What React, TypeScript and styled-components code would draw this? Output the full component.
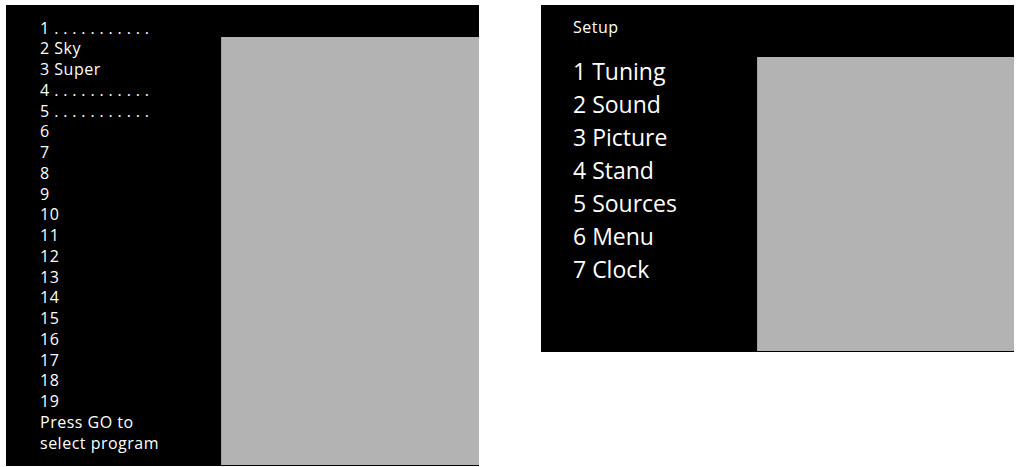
import React from 'react'
import styled, { createGlobalStyle } from 'styled-components'

const GlobalStyle = createGlobalStyle`
  html, body {
    margin: 0;
    padding: 0;
    background: #ffffff;
  }
  body {
    font-family: "Open Sans", "Noto Sans", sans-serif;
    -webkit-font-smoothing: antialiased;
  }
`

const Page = styled.div`
  display: flex;
  align-items: flex-start;
  gap: 62px;
  padding: 5px 0 0 6px;
`

const Panel = styled.div<{ $height: number }>`
  display: flex;
  width: 473px;
  height: ${ p => p.$height }px;
  background: #000000;
  color: #ffffff;
`

const MenuColumn = styled.div<{ $width: number; $left: number; $top: number }>`
  box-sizing: border-box;
  width: ${ p => p.$width }px;
  flex-shrink: 0;
  padding: ${ p => p.$top }px 0 0 ${ p => p.$left }px;
  display: flex;
  flex-direction: column;
`

const Screen = styled.div<{ $top: number }>`
  flex: 1;
  margin: ${ p => p.$top }px 0 1px 0;
  background: #b3b3b3;
  border-left: 1px solid #a4a4a4;
`

const ProgramLine = styled.div`
  font-size: 16px;
  line-height: 20.75px;
  letter-spacing: 0.5px;
  white-space: pre;
`

const Dots = styled.span`
  letter-spacing: 0.35px;
`

const Title = styled.div`
  font-size: 16px;
  line-height: 20px;
  letter-spacing: 0.5px;
  margin-bottom: 18px;
`

const SetupLine = styled.div`
  font-size: 23px;
  line-height: 33px;
  white-space: pre;
`

const dots = '. . . . . . . . . . .'

interface IProgram {
  label: string
  empty ?: boolean
}

const programs : IProgram[] = [
  { label: '1', empty: true },
  { label: '2 Sky' },
  { label: '3 Super' },
  { label: '4', empty: true },
  { label: '5', empty: true },
  ...Array.from({ length: 14 }, (_, i) => ({ label: String(i + 6) })),
  { label: 'Press GO to' },
  { label: 'select program' },
]

const setup : string[] = [
  '1 Tuning',
  '2 Sound',
  '3 Picture',
  '4 Stand',
  '5 Sources',
  '6 Menu',
  '7 Clock',
]

const App = () : JSX.Element => {
  return <>
    <GlobalStyle />
    <Page>
      <Panel $height={ 461 }>
        <MenuColumn $width={ 215 } $left={ 34 } $top={ 12.5 }>
          { programs.map(p =>
            <ProgramLine key={ p.label }>
              { p.label }{ p.empty && <Dots> { dots }</Dots> }
            </ProgramLine>
          ) }
        </MenuColumn>
        <Screen $top={ 32 } />
      </Panel>
      <Panel $height={ 347 }>
        <MenuColumn $width={ 216 } $left={ 32 } $top={ 11.5 }>
          <Title>Setup</Title>
          { setup.map(s => <SetupLine key={ s }>{ s }</SetupLine>) }
        </MenuColumn>
        <Screen $top={ 52 } />
      </Panel>
    </Page>
  </>
}

export default App
